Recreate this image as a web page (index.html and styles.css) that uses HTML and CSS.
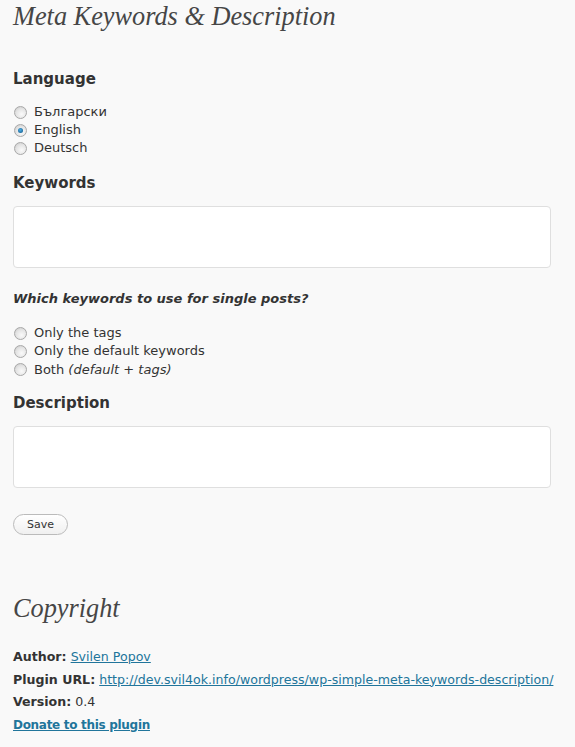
FILE: index.html
```html
<!DOCTYPE html>
<html>
<head>
<meta charset="utf-8">
<link rel="stylesheet" href="styles.css">
</head>
<body>
<div class="wrap">
  <h2 class="title">Meta Keywords &amp; Description</h2>
  <h3 class="h3 first">Language</h3>
  <div class="radios">
    <label class="radio"><span class="dot"></span>Български</label>
    <label class="radio"><span class="dot on"></span>English</label>
    <label class="radio"><span class="dot"></span>Deutsch</label>
  </div>
  <h3 class="h3">Keywords</h3>
  <div class="area"></div>
  <p class="question">Which keywords to use for single posts?</p>
  <div class="radios second">
    <label class="radio"><span class="dot"></span>Only the tags</label>
    <label class="radio"><span class="dot"></span>Only the default keywords</label>
    <label class="radio"><span class="dot"></span>Both&nbsp;<em>(default + tags)</em></label>
  </div>
  <h3 class="h3">Description</h3>
  <div class="area"></div>
  <div class="btnrow"><span class="btn">Save</span></div>
  <h2 class="title copy">Copyright</h2>
  <div class="info">
    <p><b>Author:</b> <a href="#">Svilen Popov</a></p>
    <p><b>Plugin URL:</b> <a href="#">http://dev.svil4ok.info/wordpress/wp-simple-meta-keywords-description/</a></p>
    <p><b>Version:</b> 0.4</p>
    <p><a href="#" class="donate">Donate to this plugin</a></p>
  </div>
</div>
</body>
</html>
```
FILE: styles.css
```css
html, body { margin: 0; padding: 0; background: #f9f9f9; }
body { font-family: "DejaVu Sans", Verdana, sans-serif; color: #333; font-size: 13px; }
.wrap { padding: 0 24px 0 13px; }
.title { font-family: "Liberation Serif", Georgia, serif; font-style: italic; font-weight: normal; font-size: 26.3px; color: #464646; margin: 0; padding-top: 2px; line-height: 29px; }
.h3 { font-size: 15px; font-weight: bold; margin: 0; line-height: 20px; }
.h3.first { margin-top: 38px; }
.radios { display: flex; flex-direction: column; margin-top: 14px; margin-bottom: 16px; }
.radios.second { margin-top: 16px; margin-bottom: 14px; }
.radio { display: flex; align-items: center; height: 18px; line-height: 18px; }
.radios.second .radio:last-child { height: 19px; }
.dot { width: 13px; height: 13px; border-radius: 50%; border: 1px solid #a8a8a8; background: radial-gradient(circle at 60% 65%, #fafafa 0, #e4e4e4 55%, #c4c4c4 100%); margin: 0 7px 0 1px; box-sizing: border-box; position: relative; flex: none; }
.dot.on::after { content: ""; position: absolute; left: 3px; top: 3px; width: 5px; height: 5px; border-radius: 50%; background: radial-gradient(circle at 45% 40%, #4fb0e8, #0a4f7e); }
.area { height: 62px; border: 1px solid #dfdfdf; border-radius: 4px; background: #fff; margin-top: 13px; box-sizing: border-box; }
.question { font-weight: bold; font-style: italic; margin: 22px 0 0; line-height: 18px; }
.btnrow { margin-top: 26px; }
.btn { display: inline-block; border: 1px solid #bbb; border-radius: 11px; padding: 0 13px; height: 21px; line-height: 19px; box-sizing: border-box; font-size: 11px; color: #333; background: linear-gradient(#fff, #f0f0f0); }
.title.copy { margin-top: 57px; }
.info { margin-top: 23px; font-size: 12.6px; margin-right: -24px; white-space: nowrap; }
.info p { margin: 0; line-height: 22.7px; }
.info a { color: #21759b; }
.info .donate { font-weight: bold; font-size: 12px; letter-spacing: -0.3px; }
```
